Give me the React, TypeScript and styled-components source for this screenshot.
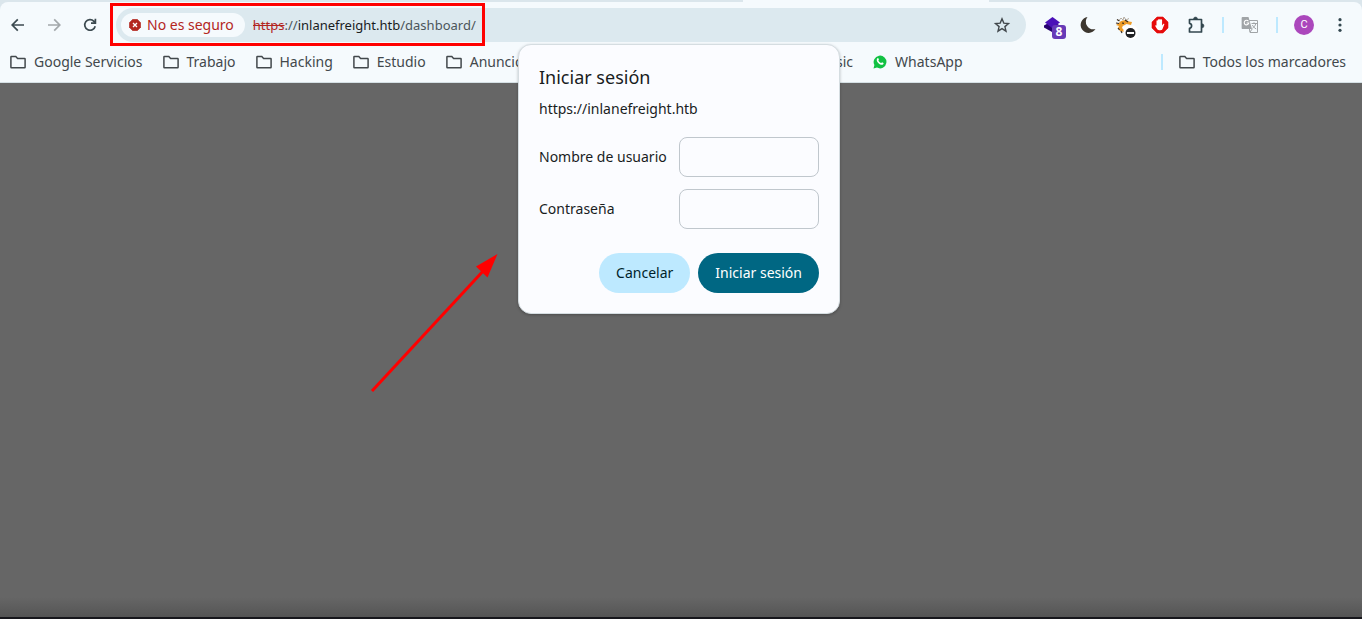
import React from "react";
import styled, { createGlobalStyle } from "styled-components";

const GlobalStyle = createGlobalStyle`
  *, *::before, *::after { box-sizing: border-box; }
  html, body, #root { height: 100%; }
  body {
    margin: 0;
    background: #666666;
    color: #191c1e;
    font-family: "Noto Sans", "Open Sans", sans-serif;
    font-size: 14px;
    line-height: 20px;
  }
  button, input { font: inherit; color: inherit; }
  button { border: 0; padding: 0; background: none; cursor: pointer; }
`;

const Window = styled.div`
  position: relative;
  display: flex;
  flex-direction: column;
  min-height: 100%;
  overflow: hidden;
`;

const Chrome = styled.header`
  background: #dbe6ec;
  border-bottom: 1px solid #d5e0e4;
`;

const TabStrip = styled.div`
  display: flex;
  justify-content: center;
  height: 2px;
  padding-left: 370px;
`;

const ActiveTab = styled.div`
  width: 246px;
  background: #f5fafd;
`;

const Bars = styled.div`
  background: #f5fafd;
  border-radius: 8px 8px 0 0;
`;

const Toolbar = styled.div`
  display: flex;
  align-items: center;
  height: 46px;
  padding-right: 4px;
`;

const IconButton = styled.button<{ $color?: string }>`
  display: flex;
  flex: none;
  align-items: center;
  justify-content: center;
  width: 36px;
  height: 34px;
  color: ${(p) => p.$color ?? "#3c4a50"};

  svg { overflow: visible; }
`;

const Omnibox = styled.div`
  display: flex;
  flex: 1;
  align-items: center;
  min-width: 0;
  height: 34px;
  margin: 0 8px;
  padding: 0 6px 0 5px;
  border-radius: 17px;
  background: #dce9ef;
`;

const SecurityChip = styled.button`
  display: flex;
  flex: none;
  align-items: center;
  gap: 6px;
  height: 24px;
  margin-right: 8px;
  padding: 0 11px 0 8px;
  border-radius: 12px;
  background: #f5fafd;
  color: #b3261e;
`;

const Url = styled.div`
  flex: 1;
  min-width: 0;
  overflow: hidden;
  white-space: nowrap;
  font-size: 13px;
  color: #4b555a;
`;

const Scheme = styled.s`
  color: #b3261e;
`;

const Host = styled.span`
  color: #191c1e;
`;

const Divider = styled.span`
  flex: none;
  width: 2px;
  height: 16px;
  margin: 0 8px;
  background: #bde9ff;
`;

const Avatar = styled.span`
  display: flex;
  align-items: center;
  justify-content: center;
  width: 20px;
  height: 20px;
  border-radius: 50%;
  background: #ab47bc;
  color: #ffffff;
  font-family: Roboto, sans-serif;
  font-size: 11px;
`;

const BookmarkBar = styled.nav`
  display: flex;
  align-items: center;
  gap: 20px;
  height: 34px;
  padding: 0 16px 6px 10px;
`;

const Bookmark = styled.button<{ $slot?: number }>`
  display: flex;
  flex: none;
  align-items: center;
  gap: 8px;
  width: ${(p) => (p.$slot ? `${p.$slot}px` : "auto")};
  color: #42484c;
  white-space: nowrap;
`;

const Spacer = styled.span`
  flex: 1;
`;

const BarDivider = styled(Divider)`
  margin: 0 -4px 0 0;
`;

const Page = styled.main`
  flex: 1;
  background: linear-gradient(to top, #555555, #666666 20px);
  border-bottom: 2px solid #17171c;
`;

const Dialog = styled.form`
  position: absolute;
  top: 44px;
  left: calc(50% - 163px);
  width: 322px;
  padding: 20px;
  border: 1px solid #d5dde1;
  border-radius: 13px;
  background: #fbfcff;
  box-shadow: 0 1px 3px rgba(0, 0, 0, 0.25);
`;

const Title = styled.h1`
  margin: 0;
  font-size: 18px;
  font-weight: 400;
  line-height: 24px;
`;

const Origin = styled.p`
  margin: 10px 0 18px;
`;

const Field = styled.label`
  display: flex;
  align-items: center;
  justify-content: space-between;
  margin-bottom: 12px;
`;

const TextInput = styled.input`
  width: 140px;
  height: 40px;
  padding: 0 12px;
  border: 1px solid #c0c7cd;
  border-radius: 8px;
  background: transparent;
`;

const Actions = styled.div`
  display: flex;
  justify-content: flex-end;
  gap: 8px;
  margin-top: 24px;
`;

const ActionButton = styled.button<{ $primary?: boolean }>`
  height: 40px;
  padding: 0 17px;
  border-radius: 20px;
  background: ${(p) => (p.$primary ? "#006783" : "#bde9ff")};
  color: ${(p) => (p.$primary ? "#ffffff" : "#001f2a")};
`;

const Highlight = styled.div`
  position: absolute;
  top: 3px;
  left: 110px;
  width: 375px;
  height: 43px;
  border: 3px solid #ff0000;
  pointer-events: none;
`;

const Arrow = styled.svg`
  position: absolute;
  top: 254px;
  left: 370px;
  pointer-events: none;
`;

const FolderIcon = () => (
  <svg width="16" height="16" viewBox="0 0 16 16" fill="none" stroke="#42484c" strokeWidth="1.5">
    <path d="M.9 13.2V3.1c0-.3.2-.5.5-.5h4.4l1.8 2h7c.3 0 .5.2.5.5v8.1c0 .3-.2.5-.5.5H1.4c-.3 0-.5-.2-.5-.5z" />
  </svg>
);

const ArrowIcon = ({ flip }: { flip?: boolean }) => (
  <svg width="16" height="16" viewBox="0 0 16 16" fill="none" stroke="currentColor" strokeWidth="1.7">
    <path d={flip ? "M2 8h11.5M8.2 2.3 13.8 8l-5.6 5.7" : "M14 8H2.5M7.8 2.3 2.2 8l5.6 5.7"} />
  </svg>
);

const ReloadIcon = () => (
  <svg width="16" height="16" viewBox="0 0 16 16" fill="none" stroke="currentColor" strokeWidth="1.7">
    <path d="M13.2 9.2A5.3 5.3 0 1 1 11.9 4.3L13.4 6M13.4 1.8V6.2H9" />
  </svg>
);

const DangerIcon = () => (
  <svg width="12" height="12" viewBox="0 0 12 12">
    <path d="M3.7.3h4.6l3.4 3.4v4.6l-3.4 3.4H3.7L.3 8.3V3.7z" fill="#b3261e" stroke="#b3261e" strokeLinejoin="round" strokeWidth=".5" />
    <path d="m4 4 4 4m0-4L4 8" stroke="#fff" strokeWidth="1.3" />
  </svg>
);

const StarIcon = () => (
  <svg width="16" height="16" viewBox="0 0 16 16" fill="none" stroke="#42484c" strokeWidth="1.4">
    <path d="m8 1.8 1.8 4.3 4.7.4-3.6 3.1 1.1 4.6L8 11.7l-4 2.5 1.1-4.6L1.5 6.5l4.7-.4z" />
  </svg>
);

const LayersIcon = () => (
  <svg width="16" height="16" viewBox="0 0 16 16">
    <path d="M0 8.500 8 4l8 4.500v2L8 15 0 10.500z" fill="#260070" />
    <path d="m1 5.500 7.500-5.500L16 5.500 8 11z" fill="#4a10b8" />
    <rect x="8" y="8" width="14" height="14" rx="3" fill="#673ab7" />
    <text x="15" y="19" textAnchor="middle" fontFamily="Noto Sans, sans-serif" fontWeight="700" fontSize="12" fill="#fff">8</text>
  </svg>
);

const MoonIcon = () => (
  <svg width="16" height="16" viewBox="0 0 16 16">
    <path d="M7.500 0A8 8 0 1 0 15.500 12 7.600 7.600 0 0 1 7.500 0z" fill="#3c362f" />
  </svg>
);

const BeastIcon = () => (
  <svg width="16" height="16" viewBox="0 0 16 16">
    <path d="M3 3.500 5 1l2 2 1-3 2 3 3-1.500" fill="none" stroke="#b5aca0" />
    <path d="M3 6c2-3.500 7-3.500 10-1.500l3 .5-1 3-4.500-1L7 9l2 3-1 3-4-1-2-3 1-2-3-1z" fill="#ef9d28" />
    <path d="M1 2.500 3.500 4M0 6l3 .5M2 11l1.500 2M5 14l1 2M6 6l2 .4M9 3l3 2" stroke="#3a2c20" strokeWidth="1.200" />
    <path d="M7 8.500 9 10l-1 3-2-2z" fill="#fff" />
    <rect x="7.500" y="8.500" width="14" height="14" rx="5" fill="#fff" />
    <circle cx="14.500" cy="16" r="5" fill="#202124" />
    <path d="M11 16h7" stroke="#fff" strokeWidth="2" />
  </svg>
);

const BlockIcon = () => (
  <svg width="16" height="16" viewBox="0 0 16 16">
    <path d="M5 0h6l5 5v6l-5 5H5l-5-5V5z" fill="#e60b0b" stroke="#e60b0b" strokeWidth=".6" strokeLinejoin="round" />
    <path d="M3.500 9.500c-.7-1.200.5-1.700 1-.8V4c0-.9 1.300-.9 1.300 0V3c0-.9 1.400-.9 1.400 0v-.4c0-.9 1.500-.9 1.500 0V3c0-.9 1.400-.9 1.400 0v5.500l1.100-1.400c.6-.6 1.500 0 1 .7L10.500 12c-.4.800-1 1.200-2 1.200H7.200c-1.200 0-1.800-.5-2.300-1.400z" fill="#fff" />
  </svg>
);

const PuzzleIcon = () => (
  <svg width="16" height="16" viewBox="0 0 16 16">
    <path d="M1.500 2.500H13.500V15H1.500v-3.600a2.600 2.600 0 0 0 0-5.100z" fill="none" stroke="#33474f" strokeWidth="1.700" strokeLinejoin="round" />
    <path d="M5.500 2a2 2 0 0 1 4 0zM14 6.800a2 2 0 0 1 0 4z" fill="#33474f" stroke="#33474f" strokeWidth=".5" />
  </svg>
);

const TranslateIcon = () => (
  <svg width="18" height="18" viewBox="0 0 18 18">
    <path d="M7 4.500h9.500v12H9z" fill="#f5fafd" stroke="#a0a4a7" />
    <path d="M1.500 1h6l3.500 12H1.500C1 13 .6 12.600 .6 12V2c0-.6.400-1 .9-1z" fill="#a0a4a7" />
    <path d="M7.400 5.200A2.300 2.300 0 1 0 7.800 7H5.600" fill="none" stroke="#fff" strokeWidth="1.100" />
    <path d="M10.500 7.500H16M13 6.300v1.200m1.800 0c-.5 2.200-1.700 3.700-3.400 4.800m0-3.300c.7 1.500 2 2.900 3.800 4M9 16l2.200-3" fill="none" stroke="#a0a4a7" />
  </svg>
);

const KebabIcon = () => (
  <svg width="16" height="16" viewBox="0 0 16 16" fill="#33474f">
    <circle cx="8" cy="2.700" r="1.600" />
    <circle cx="8" cy="8" r="1.600" />
    <circle cx="8" cy="13.300" r="1.600" />
  </svg>
);

const WhatsAppIcon = () => (
  <svg width="14" height="14" viewBox="0 0 14 14">
    <path d="M.5 13.500 1.400 10A6.400 6.400 0 1 1 4 12.600z" fill="#12c143" />
    <path d="M4.300 3.400c.5-.5 1-.3 1.200.2l.4 1c.1.400-.5.800-.5 1 .5 1.100 1.300 1.900 2.600 2.500.4 0 .7-.9 1.100-.8l1.300.6c.5.400-.1 1.700-1 1.900-2.200.5-5.600-2.500-5.700-4.800 0-.7.300-1.300.6-1.600z" fill="#fff" />
  </svg>
);

const folders = [
  { name: "Google Servicios" },
  { name: "Trabajo" },
  { name: "Hacking" },
  { name: "Estudio" },
  { name: "Anuncios", slot: 349 },
];

export default function App() {
  return (
    <Window>
      <GlobalStyle />
      <Chrome>
        <TabStrip>
          <ActiveTab />
        </TabStrip>
        <Bars>
          <Toolbar>
            <IconButton aria-label="Atrás"><ArrowIcon /></IconButton>
            <IconButton aria-label="Adelante" $color="#a3a8ab"><ArrowIcon flip /></IconButton>
            <IconButton aria-label="Recargar"><ReloadIcon /></IconButton>
            <Omnibox>
              <SecurityChip><DangerIcon />No es seguro</SecurityChip>
              <Url role="textbox" aria-label="Dirección" tabIndex={0}>
                <Scheme>https</Scheme>://<Host>inlanefreight.htb</Host>/dashboard/
              </Url>
              <IconButton aria-label="Añadir a marcadores"><StarIcon /></IconButton>
            </Omnibox>
            <IconButton aria-label="Capas"><LayersIcon /></IconButton>
            <IconButton aria-label="Modo oscuro"><MoonIcon /></IconButton>
            <IconButton aria-label="Extensión"><BeastIcon /></IconButton>
            <IconButton aria-label="Bloqueador"><BlockIcon /></IconButton>
            <IconButton aria-label="Extensiones"><PuzzleIcon /></IconButton>
            <Divider />
            <IconButton aria-label="Traducir"><TranslateIcon /></IconButton>
            <Divider />
            <IconButton aria-label="Perfil"><Avatar>C</Avatar></IconButton>
            <IconButton aria-label="Menú"><KebabIcon /></IconButton>
          </Toolbar>
          <BookmarkBar aria-label="Marcadores">
            {folders.map((f) => (
              <Bookmark key={f.name} $slot={f.slot}><FolderIcon />{f.name}</Bookmark>
            ))}
            <Bookmark>Music</Bookmark>
            <Bookmark><WhatsAppIcon />WhatsApp</Bookmark>
            <Spacer />
            <BarDivider />
            <Bookmark><FolderIcon />Todos los marcadores</Bookmark>
          </BookmarkBar>
        </Bars>
      </Chrome>
      <Page />
      <Dialog role="dialog" aria-labelledby="login-title" onSubmit={(e) => e.preventDefault()}>
        <Title id="login-title">Iniciar sesión</Title>
        <Origin>https://inlanefreight.htb</Origin>
        <Field htmlFor="user">
          Nombre de usuario
          <TextInput id="user" type="text" />
        </Field>
        <Field htmlFor="password">
          Contraseña
          <TextInput id="password" type="password" />
        </Field>
        <Actions>
          <ActionButton type="button">Cancelar</ActionButton>
          <ActionButton type="submit" $primary>Iniciar sesión</ActionButton>
        </Actions>
      </Dialog>
      <Highlight />
      <Arrow width="130" height="140" viewBox="0 0 130 140">
        <path d="M2 137 115 15" stroke="#ff0000" strokeWidth="3" />
        <path d="M127.500 0 106 12.500l11.500 11z" fill="#ff0000" />
      </Arrow>
    </Window>
  );
}
